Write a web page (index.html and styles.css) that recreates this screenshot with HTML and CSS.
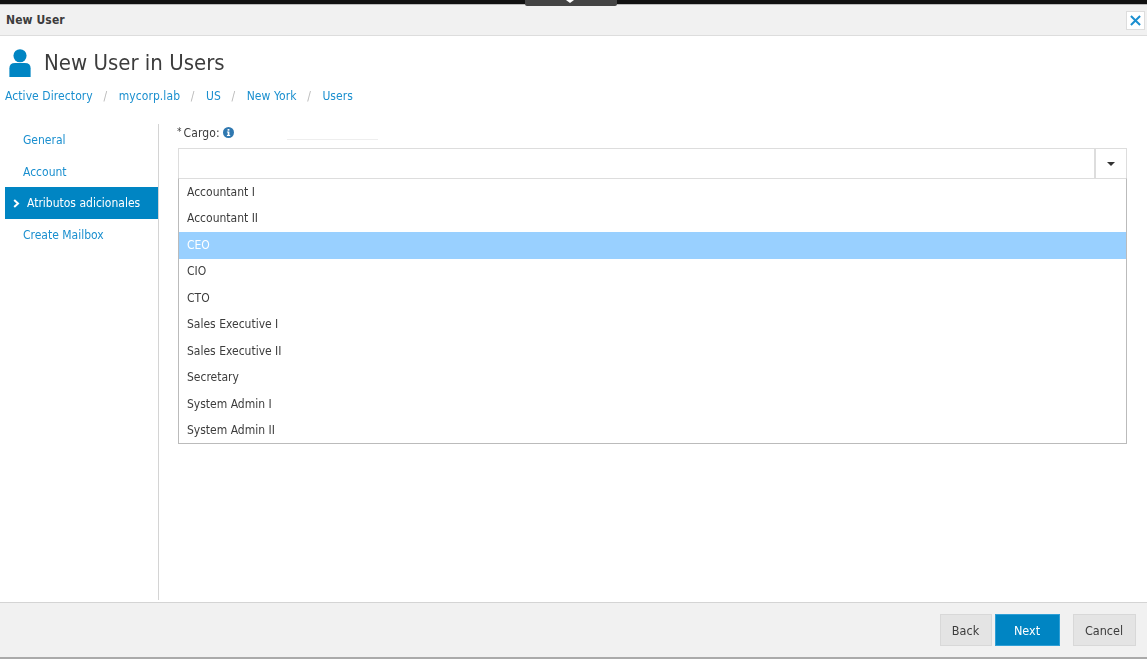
FILE: index.html
```html
<!DOCTYPE html>
<html lang="en">
<head>
<meta charset="utf-8">
<title>New User</title>
<link rel="stylesheet" href="styles.css">
</head>
<body>
<div class="app">
  <div class="topbar"><div class="toptab"><span class="topnotch"></span></div></div>
  <header class="titlebar">
    <span class="titlebar-text">New User</span>
    <button class="close" aria-label="Close">
      <svg width="11" height="11" viewBox="0 0 12 12"><path d="M1 1 L11 11 M11 1 L1 11" stroke="#1a8fd0" stroke-width="2.2" fill="none"/></svg>
    </button>
  </header>
  <div class="heading">
    <svg class="user-icon" width="22" height="28" viewBox="0 0 22 29"><circle cx="11" cy="7" r="6.8" fill="#0085c3"/><path d="M0 29 V20 Q0 14.5 6 14.5 H16 Q22 14.5 22 20 V29 Z" fill="#0085c3"/></svg>
    <h1>New User in Users</h1>
  </div>
  <nav class="crumbs">
    <a>Active Directory</a><span class="sep">/</span>
    <a>mycorp.lab</a><span class="sep">/</span>
    <a>US</a><span class="sep">/</span>
    <a>New York</a><span class="sep">/</span>
    <a>Users</a>
  </nav>
  <main class="body">
    <aside class="side">
      <a class="side-item">General</a>
      <a class="side-item">Account</a>
      <a class="side-item active"><svg class="chev" width="7" height="9" viewBox="0 0 7 9"><path d="M1.2 1 L5 4.5 L1.2 8" stroke="#fff" stroke-width="2" fill="none"/></svg>Atributos adicionales</a>
      <a class="side-item">Create Mailbox</a>
    </aside>
    <section class="form">
      <div class="label-row">
        <label class="label"><span class="req">*</span>Cargo:</label>
        <svg class="info" width="11" height="11" viewBox="0 0 11 11"><circle cx="5.5" cy="5.5" r="5.5" fill="#2f78b0"/><rect x="4.6" y="2" width="1.8" height="1.7" fill="#fff"/><path d="M3.9 4.6 H6.4 V8 H7.2 V9 H3.9 V8 H4.7 V5.6 H3.9 Z" fill="#fff"/></svg>
        <span class="ghost"></span>
      </div>
      <div class="combo">
        <div class="combo-input"></div>
        <div class="combo-btn"><span class="caret"></span></div>
      </div>
      <ul class="list">
        <li>Accountant I</li>
        <li>Accountant II</li>
        <li class="hl">CEO</li>
        <li>CIO</li>
        <li>CTO</li>
        <li>Sales Executive I</li>
        <li>Sales Executive II</li>
        <li>Secretary</li>
        <li>System Admin I</li>
        <li>System Admin II</li>
      </ul>
    </section>
  </main>
  <footer class="footer">
    <button class="btn">Back</button>
    <button class="btn primary">Next</button>
    <button class="btn cancel">Cancel</button>
  </footer>
</div>
</body>
</html>
```
FILE: styles.css
```css
* { box-sizing: border-box; }
html, body { margin: 0; height: 100%; }
body { background: #fff; font-family: "DejaVu Sans Condensed", "DejaVu Sans", sans-serif; font-size: 12px; color: #3c3c3c; overflow: hidden; }
.app { width: 1147px; height: 659px; display: flex; flex-direction: column; filter: blur(0.3px); }
.topbar { height: 5px; background: #111; border-bottom: 1px solid #bbb; position: relative; flex: none; }
.toptab { position: absolute; left: 525px; top: 0; width: 92px; height: 6px; background: #444; border-radius: 0 0 2px 2px; }
.topnotch { position: absolute; left: 41px; top: 0; width: 8px; height: 3px; background: #fff; clip-path: polygon(0 0, 100% 0, 50% 100%); }
.titlebar { height: 31px; flex: none; background: #f1f1f1; border-bottom: 1px solid #ddd; display: flex; align-items: center; justify-content: space-between; padding: 0 2px 0 6px; }
.titlebar-text { font-weight: 700; font-size: 12px; letter-spacing: 0.1px; color: #3c3c3c; }
.close { width: 19px; height: 19px; padding: 0; border: 1px solid #ddd; background: #fff; display: flex; align-items: center; justify-content: center; }
.heading { display: flex; align-items: center; gap: 13px; padding: 10px 0 0 9px; height: 44px; flex: none; }
.user-icon { margin-top: -1px; }
.heading h1 { margin: 0; font-size: 22px; font-weight: 400; color: #3c3c3c; line-height: 30px; }
.crumbs { display: flex; align-items: center; padding: 0 0 0 5px; height: 31px; flex: none; color: #1a8fcf; }
.crumbs a { color: #1a8fcf; letter-spacing: 0.08px; }
.sep { color: #bbb; margin: 0 11.6px 0 10.6px; }
.body { flex: 1; display: flex; padding: 0 20px 2px 5px; margin-top: 13px; min-height: 0; }
.side { width: 154px; border-right: 1px solid #d4d4d4; flex: none; }
.side-item { display: flex; align-items: center; height: 31.5px; padding: 1px 0 0 18px; color: #1a8fcf; }
.side-item.active { background: #0085c3; color: #fff; padding-left: 8px; }
.chev { margin-right: 7px; }
.form { flex: 1; padding: 0 0 0 19px; }
.label-row { display: flex; align-items: center; height: 24px; padding-bottom: 7px; margin-left: -1px; }
.label { letter-spacing: 0.1px; }
.req { vertical-align: 2px; font-size: 10px; margin-right: 2px; }
.info { margin-left: 3px; }
.ghost { width: 91px; height: 1px; background: #eee; margin: 14px 0 0 53px; }
.combo { display: flex; height: 31px; border: 1px solid #ddd; border-bottom: 0; background: #fff; }
.combo-input { flex: 1; border-right: 2px solid #ddd; }
.combo-btn { width: 30px; display: flex; align-items: center; justify-content: center; }
.caret { width: 0; height: 0; border: 4px solid transparent; border-top: 4px solid #333; border-bottom: 0; }
.list { margin: -1px 0 0; padding: 0; list-style: none; border: 1px solid #bbb; border-top: 1px solid #ddd; background: #fff; }
.list li { height: 26.5px; display: flex; align-items: center; padding: 0 0 1px 8px; }
.list li:last-child { height: 25.5px; padding-bottom: 0; }
.list li.hl { background: #99d0ff; color: #fff; }
.footer { height: 57px; flex: none; background: #f1f1f1; border-top: 1px solid #d4d4d4; border-bottom: 2px solid #aaa; display: flex; align-items: center; justify-content: flex-end; padding: 0 11px 0 0; }
.btn { height: 32px; width: 52px; font: inherit; font-size: 12.5px; border: 1px solid #d8d8d8; background: #e4e4e4; color: #3c3c3c; padding: 0 1px 0 0; }
.btn.primary { background: #0085c3; border-color: #2f9fd6; color: #fff; width: 65px; margin-left: 3px; }
.btn.cancel { width: 63px; margin-left: 13px; }
```
